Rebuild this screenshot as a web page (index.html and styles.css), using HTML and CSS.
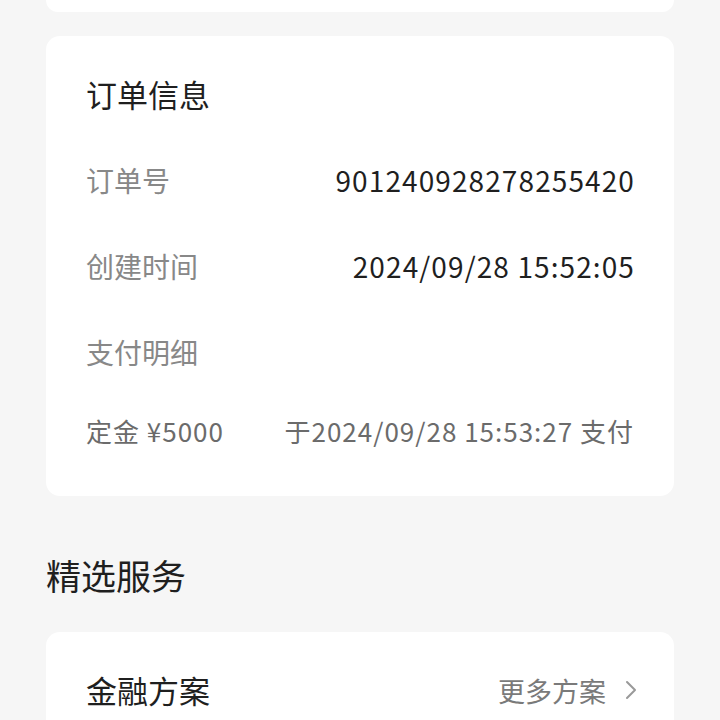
FILE: index.html
```html
<!DOCTYPE html>
<html lang="zh-CN">
<head>
  <meta charset="UTF-8" />
  <meta name="viewport" content="width=device-width, initial-scale=1.0"/>
  <title>订单详情</title>
  <link rel="stylesheet" href="styles.css">
</head>
<body>

<div class="card card-top"></div>

<section class="card order">
  <h2 class="card-title">订单信息</h2>

  <div class="row">
    <span class="label">订单号</span>
    <span class="value">901240928278255420</span>
  </div>

  <div class="row">
    <span class="label">创建时间</span>
    <span class="value">2024/09/28 15:52:05</span>
  </div>

  <div class="row">
    <span class="label">支付明细</span>
  </div>

  <div class="row pay">
    <span>定金 ¥5000</span>
    <span>于2024/09/28 15:53:27 支付</span>
  </div>
</section>

<h2 class="section-title">精选服务</h2>

<section class="card services">
  <div class="row">
    <span class="card-title">金融方案</span>
    <a class="more" href="#">更多方案
      <svg width="14" height="22" viewBox="0 0 14 22"><path d="M3 3l8 8-8 8" fill="none" stroke="#999" stroke-width="2" stroke-linecap="round" stroke-linejoin="round"/></svg>
    </a>
  </div>
</section>

</body>
</html>
```

FILE: styles.css
```css
body { font-family: "Noto Sans CJK SC", "Noto Sans", sans-serif; margin: 0; padding: 0; background: #f6f6f6; color: #1f1f1f; overflow: hidden; }
.card { background: #ffffff; margin: 0 46px; border-radius: 14px; padding: 38px 40px 46px; }
.card-top { height: 12px; padding: 0; border-radius: 0 0 14px 14px; margin-bottom: 24px; }
.card-title { font-size: 31px; font-weight: 400; line-height: 40px; margin: 0; color: #1f1f1f; }
.order { display: flex; flex-direction: column; gap: 46px; }
.row { display: flex; justify-content: space-between; align-items: center; height: 40px; }
.label { font-size: 28px; color: #888888; }
.value { font-size: 28px; letter-spacing: 1.1px; margin-right: -1px; color: #1f1f1f; }
.pay { font-size: 26px; letter-spacing: 1px; color: #6b6b6b; margin-top: -8px; }
.section-title { font-size: 35px; font-weight: 400; line-height: 44px; margin: 57px 46px 35px; color: #1f1f1f; }
.services { padding-bottom: 40px; padding-top: 38px; }
.more { display: flex; align-items: center; gap: 18px; font-size: 27px; color: #7a7a7a; text-decoration: none; margin-right: -4px; }
```
